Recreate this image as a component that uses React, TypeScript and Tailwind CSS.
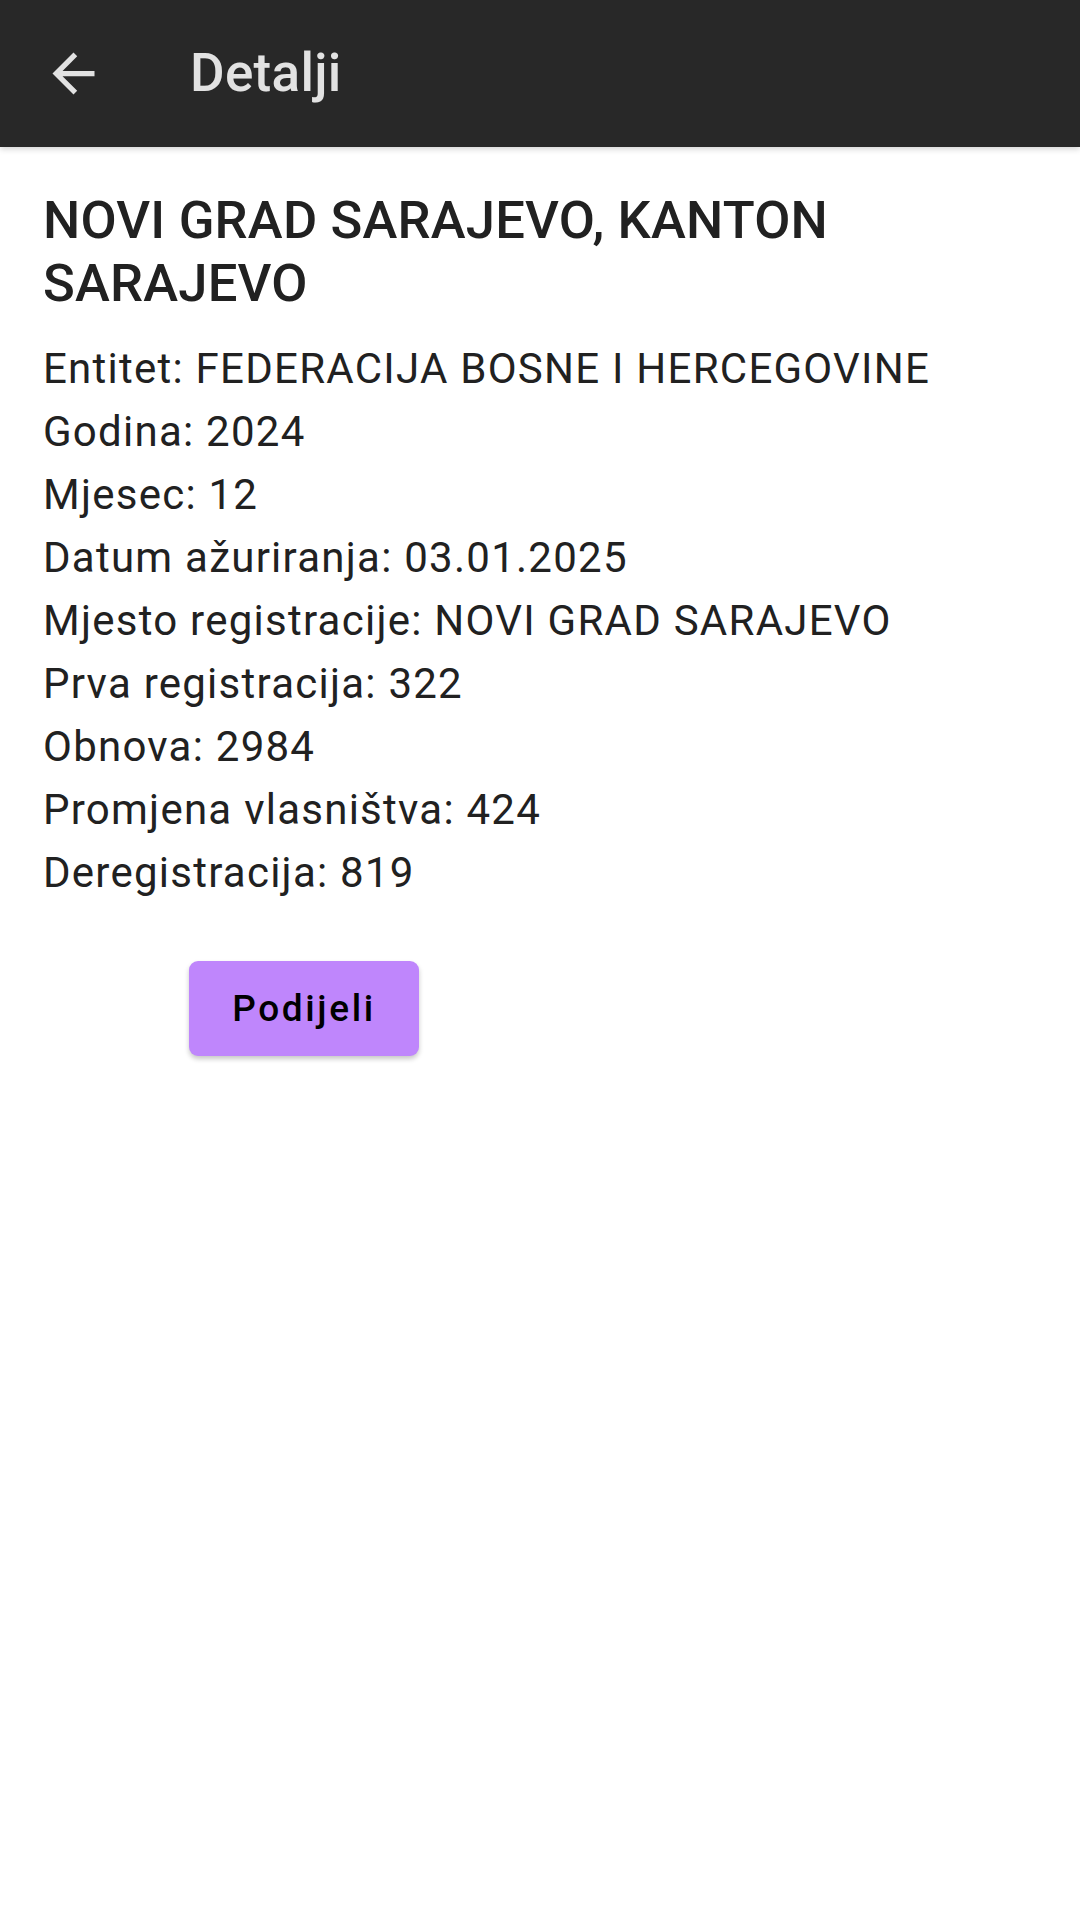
import React from "react";

const rows: string[] = [
  "Entitet: FEDERACIJA BOSNE I HERCEGOVINE",
  "Godina: 2024",
  "Mjesec: 12",
  "Datum ažuriranja: 03.01.2025",
  "Mjesto registracije: NOVI GRAD SARAJEVO",
  "Prva registracija: 322",
  "Obnova: 2984",
  "Promjena vlasništva: 424",
  "Deregistracija: 819",
];

export default function App() {
  return (
    <div
      className="w-[1080px] h-[1920px] bg-white flex flex-col"
      style={{ fontFamily: "Roboto, 'Noto Sans', sans-serif" }}
    >
      <header className="h-[147px] bg-[#282828] flex items-center shrink-0 shadow-[0_2px_6px_rgba(0,0,0,0.18)] relative z-10">
        <div className="w-[63px] h-[63px] ml-[42px] flex items-center justify-center">
          <svg width="63" height="63" viewBox="0 0 24 24" fill="#e2e2e2">
            <path d="M20 11H7.83l5.59-5.59L12 4l-8 8 8 8 1.41-1.41L7.83 13H20v-2z" />
          </svg>
        </div>
        <h1 className="ml-[85px] text-[53px] font-medium text-[#e2e2e2] leading-none tracking-[0.3px]">
          Detalji
        </h1>
      </header>
      <main className="pt-[42px] px-[43px] flex flex-col">
        <h2 className="text-[52.5px] leading-[63px] font-medium text-[#212121] tracking-[0.2px]">
          NOVI GRAD SARAJEVO, KANTON SARAJEVO
        </h2>
        <div className="mt-[22px] flex flex-col">
          {rows.map((r) => (
            <p
              key={r}
              className="text-[42px] leading-[63px] text-[#212121] tracking-[1.25px]"
            >
              {r}
            </p>
          ))}
        </div>
        <div className="mt-[57px] ml-[146px]">
          <button className="w-[230px] h-[95px] rounded-[9px] bg-[#bf86fc] text-black text-[37px] font-medium tracking-[2.6px] shadow-[0_3px_5px_rgba(0,0,0,0.22)]">
            Podijeli
          </button>
        </div>
      </main>
    </div>
  );
}
